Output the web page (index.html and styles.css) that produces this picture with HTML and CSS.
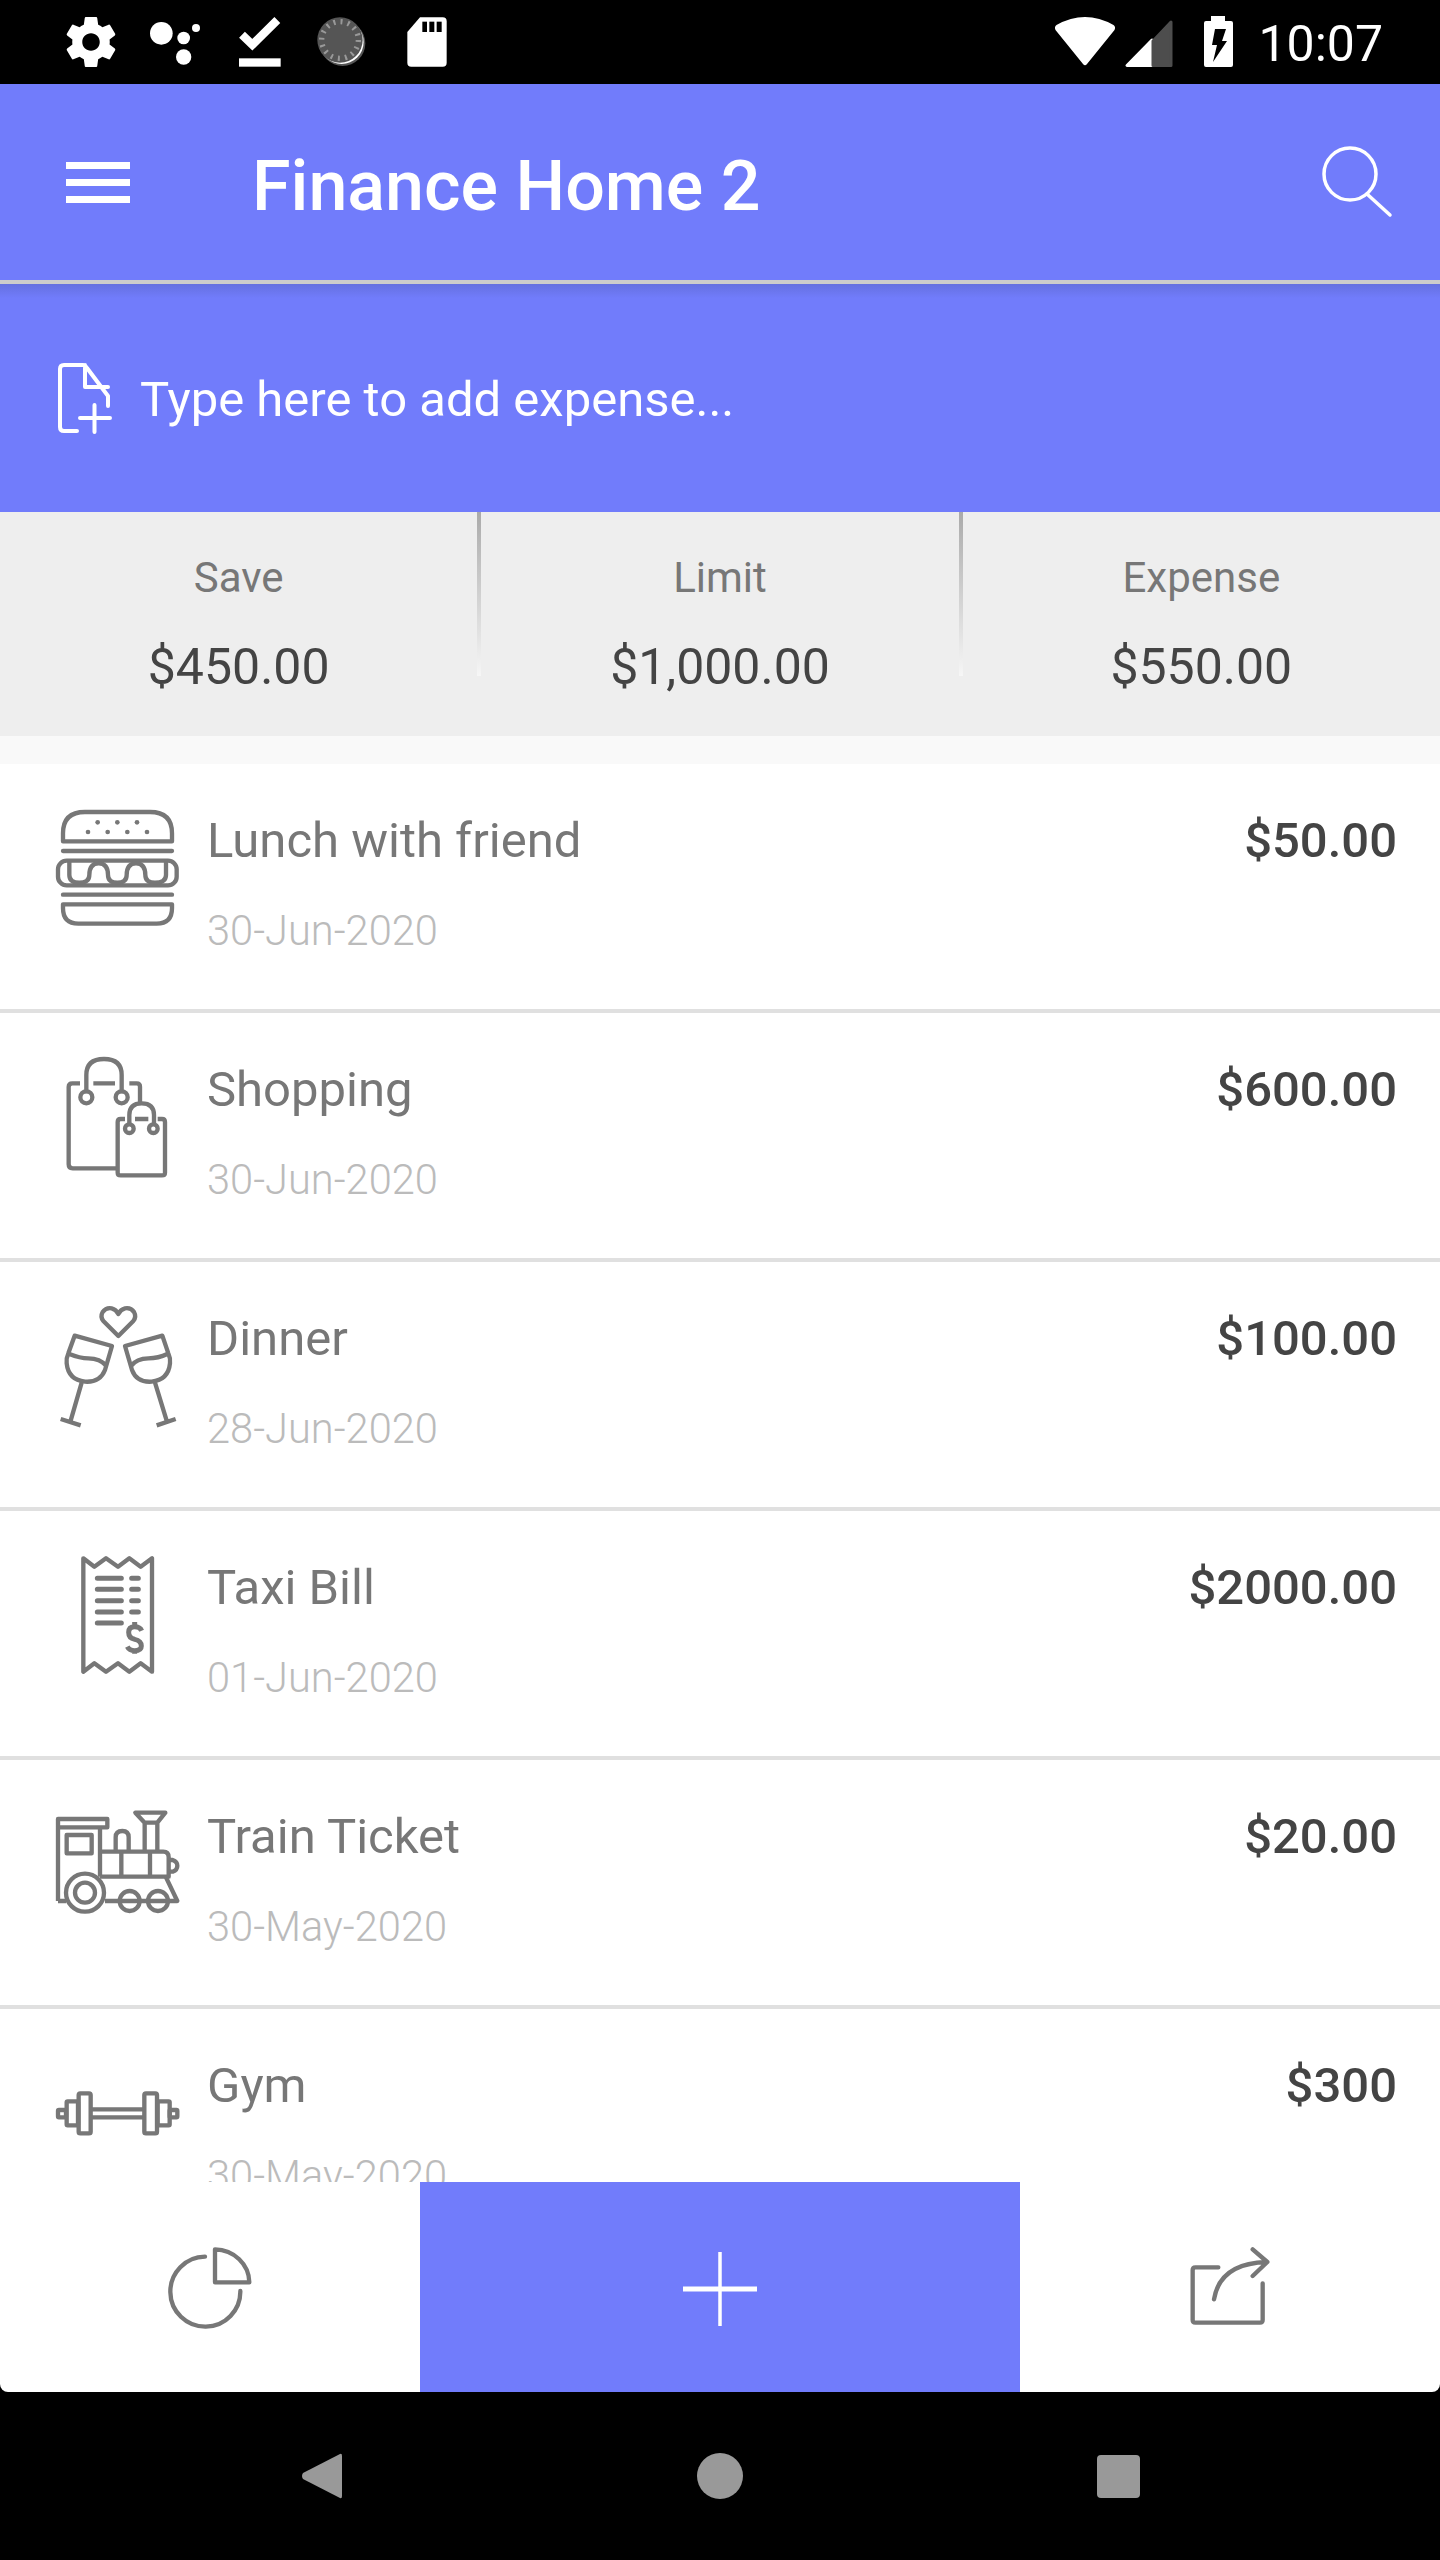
FILE: index.html
```html
<!DOCTYPE html>
<html>
<head>
  <title>Finance Home 2</title>
  <meta charset="utf-8" />
  <link rel="stylesheet" href="styles.css">
</head>
<body>
<div class="app">

  <div class="status">
    <svg class="status-left" viewBox="0 0 1200 252">
      <path transform="translate(33 36) scale(7.5)" fill="#fff" fill-rule="evenodd" d="M19.43 12.98c.04-.32.07-.64.07-.98s-.03-.66-.07-.98l2.11-1.65c.19-.15.24-.42.12-.64l-2-3.46c-.12-.22-.39-.3-.61-.22l-2.49 1c-.52-.4-1.08-.73-1.69-.98l-.38-2.65C14.46 2.18 14.25 2 14 2h-4c-.25 0-.46.18-.49.42l-.38 2.65c-.61.25-1.17.59-1.69.98l-2.49-1c-.23-.09-.49 0-.61.22l-2 3.46c-.13.22-.07.49.12.64l2.11 1.65c-.04.32-.07.65-.07.98s.03.66.07.98l-2.11 1.65c-.19.15-.24.42-.12.64l2 3.46c.12.22.39.3.61.22l2.49-1c.52.4 1.08.73 1.69.98l.38 2.65c.03.24.24.42.49.42h4c.25 0 .46-.18.49-.42l.38-2.65c.61-.25 1.17-.59 1.69-.98l2.49 1c.23.09.49 0 .61-.22l2-3.46c.12-.22.07-.49-.12-.64l-2.11-1.65zM12 15.5c-1.93 0-3.5-1.57-3.5-3.5s1.57-3.5 3.5-3.5 3.5 1.57 3.5 3.5-1.57 3.5-3.5 3.5z"/>
      <g fill="#fff">
        <circle cx="334" cy="100" r="34"/>
        <circle cx="401" cy="114" r="19"/>
        <circle cx="438" cy="84" r="12"/>
        <circle cx="401" cy="171" r="23"/>
        <rect x="567" y="175" width="125" height="25"/>
      </g>
      <path d="M576 104 L607 134 L682 60" fill="none" stroke="#fff" stroke-width="25"/>
      <circle cx="878" cy="130" r="68" fill="#555"/>
      <circle cx="875" cy="126" r="66" fill="#fff"/>
      <circle cx="870" cy="120" r="68" fill="#555"/>
      <circle cx="870" cy="120" r="55" fill="none" stroke="#999" stroke-width="16" stroke-dasharray="6 15.6"/>
      <path fill="#fff" d="M1110 52 H1178 Q1190 52 1190 64 V188 Q1190 200 1178 200 H1084 Q1072 200 1072 188 V96 Z"/>
      <g fill="#000">
        <rect x="1117" y="65" width="14" height="31"/>
        <rect x="1138" y="65" width="15" height="31"/>
        <rect x="1160" y="65" width="15" height="31"/>
      </g>
    </svg>
    <div class="status-right">
      <svg class="status-icons" viewBox="0 0 200 84">
        <path fill="#fff" d="M15.5 25 Q44 9 72.5 25 Q75 27 73.5 30 L46 64 Q44 66.5 42 64 L14.5 30 Q13 27 15.5 25 Z"/>
        <path fill="#fff" stroke="#fff" stroke-width="3" stroke-linejoin="round" d="M86 65.500 H111 V40 Z"/>
        <path fill="#4d4d4d" stroke="#4d4d4d" stroke-width="3" stroke-linejoin="round" d="M112 65.500 H130 V22 L112 41 Z"/>
        <path fill="#fff" d="M170 16 H184 V21 H190 Q192 21 192 23 V65 Q192 67 190 67 H165 Q163 67 163 65 V23 Q163 21 165 21 H170 Z"/>
        <path fill="#000" d="M174 29 H185 L181 41 H186 L172 62 L176 45 H171 Z"/>
      </svg>
      <span class="clock">10:07</span>
    </div>
  </div>

  <div class="toolbar">
    <div class="burger"><span></span><span></span><span></span></div>
    <div class="toolbar-title">Finance Home 2</div>
    <svg class="search-icon" width="76" height="76" viewBox="0 0 76 76">
      <circle cx="30" cy="30" r="26" fill="none" stroke="#fff" stroke-width="3.500"/>
      <path d="M47 50 L70 71" fill="none" stroke="#fff" stroke-width="3.500" stroke-linecap="round"/>
    </svg>
  </div>

  <div class="add-bar">
    <svg class="add-icon" width="60" height="76" viewBox="0 0 60 76">
      <path d="M23 71 H10 Q6 71 6 67 V9 Q6 5 10 5 H29 Q31 5 33 8 L54 36 V46 M31 5 V27 H54 M40.500 45 V72 M26 58 H56" fill="none" stroke="#fff" stroke-width="4" stroke-linecap="round" stroke-linejoin="round"/>
    </svg>
    <div class="add-text">Type here to add expense...</div>
  </div>

  <div class="stats">
    <div class="stat">
      <div class="stat-label">Save</div>
      <div class="stat-value">$450.00</div>
    </div>
    <div class="stat-sep"></div>
    <div class="stat">
      <div class="stat-label">Limit</div>
      <div class="stat-value">$1,000.00</div>
    </div>
    <div class="stat-sep"></div>
    <div class="stat">
      <div class="stat-label">Expense</div>
      <div class="stat-value">$550.00</div>
    </div>
  </div>

  <div class="list">

    <div class="row">
      <svg class="row-icon" viewBox="72 72 384 384">
        <path d="M99 184 V160 Q99 96 165 96 H360 Q426 96 426 160 V184 Z"/>
        <path d="M99 213 H426 M99 344 H426" stroke-linecap="round"/>
        <rect x="84" y="242" width="356" height="74" rx="26"/>
        <path d="M118 244 V285 Q118 308 148 308 Q178 308 178 285 Q178 250 206 250 Q234 250 234 285 Q234 308 262 308 Q290 308 290 285 Q290 250 318 250 Q346 250 346 285 Q346 308 375 308 Q408 308 408 285 V244"/>
        <path d="M99 373 H426 V385 Q426 431 380 431 H145 Q99 431 99 385 Z"/>
        <g class="dots">
          <circle cx="203" cy="127" r="7"/><circle cx="262" cy="127" r="7"/><circle cx="321" cy="127" r="7"/>
          <circle cx="174" cy="156" r="7"/><circle cx="233" cy="156" r="7"/><circle cx="292" cy="156" r="7"/><circle cx="351" cy="156" r="7"/>
        </g>
      </svg>
      <div class="row-text">
        <div class="row-name">Lunch with friend</div>
        <div class="row-date">30-Jun-2020</div>
      </div>
      <div class="row-amount">$50.00</div>
    </div>

    <div class="row">
      <svg class="row-icon" viewBox="72 69 384 384">
        <path d="M150 160 H127 Q116 160 116 171 V403 Q116 415 128 415 H262 M298 160 H320 Q330 160 330 170 V218 M190 160 H255"/>
        <path d="M169 190 V135 Q169 87 222 87 Q275 87 275 135 V190"/>
        <circle cx="169" cy="202" r="18"/>
        <circle cx="275" cy="202" r="18"/>
        <path d="M285 267 H272 Q263 267 263 276 V428 Q263 436 272 436 H396 Q405 436 405 428 V276 Q405 267 396 267 H383 M315 267 H355"/>
        <path d="M298 285 V255 Q298 220 335 220 Q372 220 372 255 V285"/>
        <circle cx="298" cy="296" r="13"/>
        <circle cx="370" cy="296" r="13"/>
      </svg>
      <div class="row-text">
        <div class="row-name">Shopping</div>
        <div class="row-date">30-Jun-2020</div>
      </div>
      <div class="row-amount">$600.00</div>
    </div>

    <div class="row">
      <svg class="row-icon" viewBox="72 816 384 384">
        <path d="M265 918 L220 873 Q210 860 218 846 Q228 832 245 835 Q258 838 265 852 Q272 838 285 835 Q303 832 312 846 Q320 860 310 873 Z"/>
        <path d="M134 917 L246 948 L225 1020 Q210 1058 165 1055 Q115 1050 110 1000 Q108 985 115 970 Z"/>
        <path d="M118 972 Q150 985 175 985 Q210 985 230 1008"/>
        <path d="M155 1058 L122 1172 M92 1167 L152 1186"/>
        <path d="M397 917 L285 948 L306 1020 Q320 1058 365 1055 Q415 1050 420 1000 Q422 985 415 970 Z"/>
        <path d="M303 1008 Q320 985 355 985 Q385 985 412 972"/>
        <path d="M375 1058 L410 1172 M380 1186 L437 1167"/>
      </svg>
      <div class="row-text">
        <div class="row-name">Dinner</div>
        <div class="row-date">28-Jun-2020</div>
      </div>
      <div class="row-amount">$100.00</div>
    </div>

    <div class="row">
      <svg class="row-icon" viewBox="72 153 384 384">
        <path d="M160 175 L193 200 L228 175 L264 200 L298 175 L332 200 L366 175 V515 L332 490 L298 515 L264 490 L228 515 L193 490 L160 515 Z"/>
        <path d="M202 235 H274 M202 268 H274 M202 302 H274 M202 336 H274 M202 369 H274 M305 235 H325 M305 268 H325 M305 302 H325 M305 336 H325" stroke-width="15" stroke-linecap="round"/>
        <path d="M335 392 Q330 380 314 380 Q296 380 296 397 Q296 415 314 418 Q334 422 334 438 Q334 452 314 452 Q298 452 292 440 M314 366 V380 M314 452 V461" stroke-width="15"/>
      </svg>
      <div class="row-text">
        <div class="row-name">Taxi Bill</div>
        <div class="row-date">01-Jun-2020</div>
      </div>
      <div class="row-amount">$2000.00</div>
    </div>

    <div class="row">
      <svg class="row-icon" viewBox="72 900 384 384">
        <path d="M84 1203 V957 H232 V982 H84 M210 982 V1130 M110 1005 H185 V1060 H110 Z"/>
        <path d="M210 1055 H400 Q416 1055 416 1072 V1130 H210 M274 1055 V1125 M360 1055 V1125"/>
        <path d="M416 1080 H428 Q442 1085 442 1097 Q442 1110 428 1115 H416"/>
        <path d="M257 1055 V1012 Q257 993 277 993 Q296 993 296 1012 V1055"/>
        <path d="M344 1055 V968 H382 V1055 M316 938 H406 L382 968 H344 Z"/>
        <circle cx="165" cy="1178" r="57"/>
        <circle cx="165" cy="1178" r="30"/>
        <circle cx="299" cy="1203" r="30"/>
        <circle cx="384" cy="1203" r="30"/>
        <path d="M84 1203 H108 M225 1203 H442 L408 1132"/>
      </svg>
      <div class="row-text">
        <div class="row-name">Train Ticket</div>
        <div class="row-date">30-May-2020</div>
      </div>
      <div class="row-amount">$20.00</div>
    </div>

    <div class="row">
      <svg class="row-icon" viewBox="72 -33 384 384">
        <rect x="84" y="150" width="24" height="22" rx="3"/>
        <rect x="110" y="124" width="34" height="72" rx="3"/>
        <rect x="146" y="100" width="36" height="120" rx="5"/>
        <path d="M182 148 H343 M182 172 H343"/>
        <rect x="343" y="100" width="38" height="120" rx="5"/>
        <rect x="383" y="124" width="36" height="72" rx="3"/>
        <rect x="419" y="150" width="23" height="22" rx="3"/>
      </svg>
      <div class="row-text">
        <div class="row-name">Gym</div>
        <div class="row-date">30-May-2020</div>
      </div>
      <div class="row-amount">$300</div>
    </div>

  </div>

  <div class="tabs">
    <div class="tab">
      <svg class="tab-icon" viewBox="0 6 360 390">
        <path d="M165 110 A105 105 0 1 0 271 213"/>
        <path d="M195 88 A105 100 0 0 1 298 187 H195 Z"/>
      </svg>
    </div>
    <div class="tab tab-main">
      <svg class="plus-icon" width="74" height="74" viewBox="0 0 74 74">
        <path d="M37 0 V74" stroke="#fff" stroke-width="3.500"/>
        <path d="M0 37 H74" stroke="#fff" stroke-width="5"/>
      </svg>
    </div>
    <div class="tab">
      <svg class="tab-icon" viewBox="0 6 360 390">
        <path d="M145 142 H76 Q68 142 68 150 V300 Q68 308 76 308 H270 Q278 308 278 300 V190"/>
        <path d="M132 238 Q150 130 290 126 M248 88 L292 126 L248 168"/>
      </svg>
    </div>
  </div>

  <div class="navbar">
    <svg width="41" height="46" viewBox="0 0 41 46"><path fill="#999" d="M39 1 Q41 0 41 3 V43 Q41 46 39 45 L2 26 Q0 23 2 20 Z"/></svg>
    <div class="nav-home"></div>
    <div class="nav-recent"></div>
  </div>

</div>
</body>
</html>
```

FILE: styles.css
```css
html, body {
  margin: 0px;
  padding: 0px;
  background: #000;
}

.app {
  width: 1440px;
  height: 2560px;
  display: flex;
  flex-direction: column;
  overflow: hidden;
  background: #000;
  font-family: Roboto, sans-serif;
}

/* status bar */
.status {
  height: 84px;
  flex: none;
  display: flex;
  justify-content: space-between;
  background: #000;
}
.status-left { width: 400px; height: 84px; margin-left: 50px; }
.status-right { display: flex; margin-right: 57px; }
.status-icons { width: 200px; height: 84px; margin-right: 17px; }
.clock { color: #fff; font-size: 50px; line-height: 88px; }

/* top */
.toolbar {
  height: 196px;
  flex: none;
  display: flex;
  align-items: center;
  background: #717cfb;
  border-bottom: 4px solid #ccc;
}
.burger {
  width: 64px;
  margin-left: 66px;
  display: flex;
  flex-direction: column;
  gap: 10px;
}
.burger span { height: 7px; background: #fff; }
.toolbar-title {
  margin-left: 122px;
  margin-top: 7px;
  color: #fff;
  font-size: 70px;
  font-weight: 500;
}
.search-icon { margin-left: auto; margin-right: 44px; }

.add-bar {
  height: 228px;
  flex: none;
  display: flex;
  align-items: center;
  background: linear-gradient(#6570e0, #717cfb 14px);
}
.add-icon { margin-left: 54px; }
.add-text {
  margin-left: 26px;
  margin-top: 3px;
  color: #fff;
  font-size: 49px;
}

/* save / limit / expense */
.stats {
  height: 224px;
  flex: none;
  display: flex;
  background: #eee;
  text-align: center;
}
.stat { flex: 1; padding-top: 41px; }
.stat-label { color: #777; font-size: 42px; line-height: 50px; }
.stat-value { margin-top: 34px; color: #444; font-size: 50px; line-height: 60px; }
.stat-sep {
  width: 4px;
  height: 164px;
  background: linear-gradient(#aaa, #f6f6f6);
}

/* expense list */
.list {
  flex: 1;
  overflow: hidden;
  background: #fff;
  border-top: 28px solid #f9f9f9;
}
.row {
  height: 249px;
  box-sizing: border-box;
  display: flex;
  border-bottom: 4px solid #e0e0e0;
}
.row-icon {
  width: 128px;
  height: 128px;
  flex: none;
  margin: 40px 25px 0px 54px;
  fill: none;
  stroke: #777;
  stroke-width: 13;
  stroke-linejoin: round;
}
.row-icon .dots { fill: #777; stroke: none; }
.row-text { padding-top: 47px; }
.row-name { color: #777; font-size: 49px; line-height: 60px; }
.row-date { margin-top: 35px; color: #bbb; font-size: 41.6px; font-weight: 300; line-height: 50px; }
.row-amount {
  margin-left: auto;
  padding: 47px 43px 0px 0px;
  color: #444;
  font-size: 49px;
  font-weight: 500;
  line-height: 60px;
}

/* bottom */
.tabs {
  height: 210px;
  flex: none;
  display: flex;
  background: #fff;
  border-radius: 0px 0px 8px 8px;
}
.tab {
  width: 420px;
  display: flex;
  align-items: center;
  justify-content: center;
}
.tab-main { width: 600px; background: #717cfb; }
.plus-icon { margin-top: 4px; }
.tab-icon {
  width: 120px;
  height: 130px;
  fill: none;
  stroke: #777;
  stroke-width: 13;
  stroke-linecap: round;
  stroke-linejoin: round;
}

.navbar {
  height: 168px;
  flex: none;
  box-sizing: border-box;
  display: flex;
  align-items: center;
  justify-content: space-between;
  padding: 0px 300px 0px 301px;
  background: #000;
}
.nav-home { width: 46px; height: 46px; border-radius: 50%; background: #999; }
.nav-recent { width: 43px; height: 43px; border-radius: 4px; background: #999; }
```
